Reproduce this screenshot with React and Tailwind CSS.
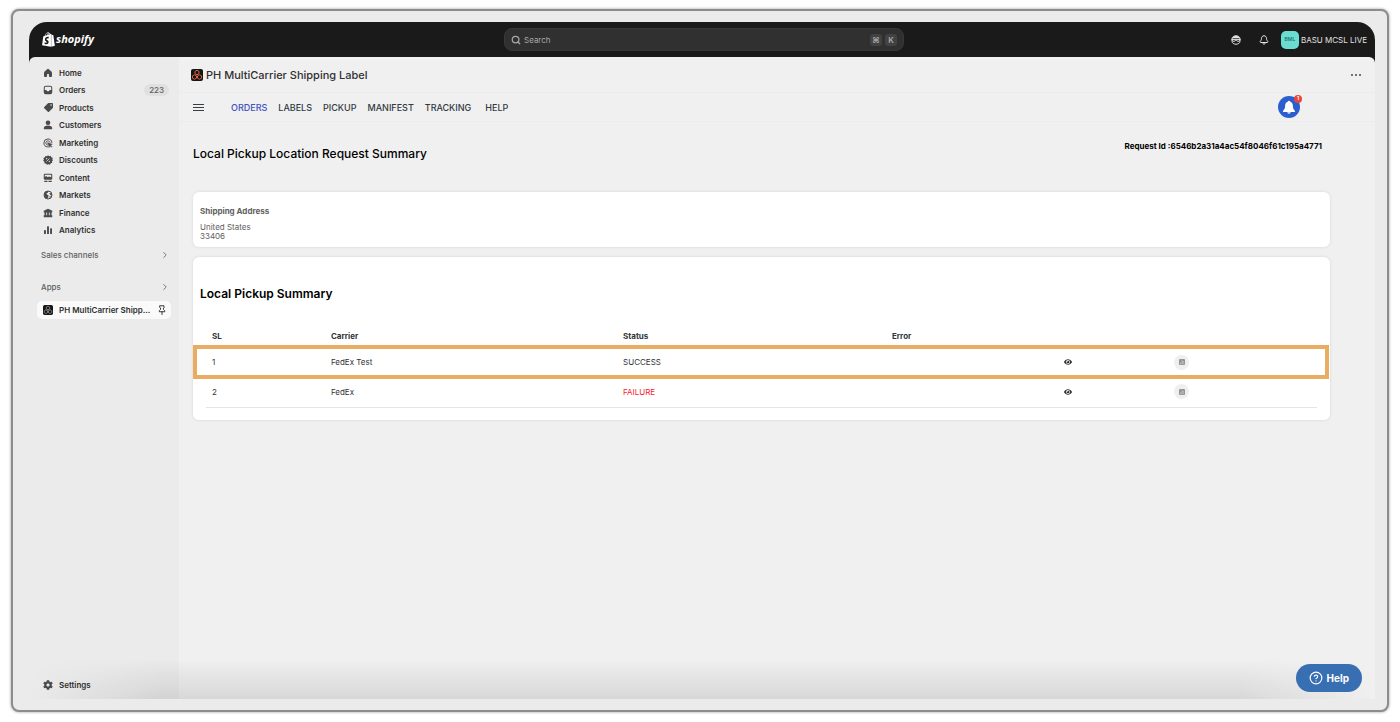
import { useState } from "react";
import { FaTag, FaEye, FaShopify, FaCog } from "react-icons/fa";
import { FiSearch, FiChevronRight, FiHelpCircle } from "react-icons/fi";

const HomeIcon = () => (
  <svg viewBox="0 0 20 20" className="size-[10px]" fill="currentColor">
    <path d="M8.300 2.300a2.400 2.400 0 0 1 3.400 0l5 4.700c.8.8 1.300 1.800 1.300 3V16a2 2 0 0 1-2 2h-2.500a1.500 1.500 0 0 1-1.500-1.500V13a1 1 0 0 0-1-1H9a1 1 0 0 0-1 1v3.500A1.500 1.500 0 0 1 6.500 18H4a2 2 0 0 1-2-2v-6c0-1.200.5-2.200 1.300-3z" />
  </svg>
);

const OrdersIcon = () => (
  <svg viewBox="0 0 20 20" className="size-[10px]" fill="currentColor">
    <path
      fillRule="evenodd"
      d="M5.500 1.500h9A4 4 0 0 1 18.500 5.500v9a4 4 0 0 1-4 4h-9a4 4 0 0 1-4-4v-9a4 4 0 0 1 4-4zM5.500 3.500a2 2 0 0 0-2 2V10h2.300c.7 0 1.200.4 1.500 1l.3.700c.2.500.6.800 1.100.800h2.600c.5 0 .9-.3 1.100-.8l.3-.7c.3-.6.8-1 1.500-1h2.300V5.500a2 2 0 0 0-2-2z"
    />
  </svg>
);

const CustomersIcon = () => (
  <svg viewBox="0 0 20 20" className="size-[10px]" fill="currentColor">
    <circle cx="10" cy="5.500" r="4.600" />
    <path d="M1.500 16.500C1.500 13 5.500 11 10 11s8.500 2 8.500 5.500c0 1.200-.8 2-2 2h-13c-1.200 0-2-.8-2-2z" />
  </svg>
);

const MarketingIcon = () => (
  <svg
    viewBox="0 0 20 20"
    className="size-[10px]"
    fill="none"
    stroke="currentColor"
    strokeWidth="2"
    strokeLinecap="round"
  >
    <path d="M17.800 9A8 8 0 1 0 9 17.900" />
    <path d="M14 8.500a4.300 4.300 0 1 0-5.500 5.500" />
    <path
      d="M9.500 9.500l9 3-3.500 1.800 3 3-1.200 1.200-3-3-1.600 3.200z"
      fill="currentColor"
      strokeWidth="1"
    />
  </svg>
);

const DiscountsIcon = () => (
  <svg viewBox="0 0 20 20" className="size-[10px]">
    <path
      fill="currentColor"
      d="M10 .5l2.400 2 3-.9 1.100 2.900 3 1-.9 3 1.400 2-2 2.200.5 3-3 .9-1.400 2.700-2.900-1L8 19.500l-2-2.400-3-.3-.2-3.100L.3 11.700l1.400-2.700L.9 6l2.800-1.400L5 1.800l3 .6z"
    />
    <path d="M7 13l6-6" stroke="#ebebeb" strokeWidth="1.500" />
    <circle cx="7.300" cy="7.300" r="1.400" fill="#ebebeb" />
    <circle cx="12.700" cy="12.700" r="1.400" fill="#ebebeb" />
  </svg>
);

const ContentIcon = () => (
  <svg viewBox="0 0 20 20" className="size-[10px]" fill="currentColor">
    <path
      fillRule="evenodd"
      d="M4 1.500h12A2.500 2.500 0 0 1 18.500 4v7a2.500 2.500 0 0 1-2.500 2.500H4A2.500 2.500 0 0 1 1.500 11V4A2.500 2.500 0 0 1 4 1.500zM3.500 8l3-1.800 3 2.300 2.500-1.500 4.500 1.500V4.500a1 1 0 0 0-1-1h-11a1 1 0 0 0-1 1z"
    />
    <path d="M2.500 15.500H9V18H2.500zM11 15.500h6.500V18H11z" />
  </svg>
);

const MarketsIcon = () => (
  <svg viewBox="0 0 20 20" className="size-[10px]">
    <circle
      cx="10"
      cy="10"
      r="8"
      fill="none"
      stroke="currentColor"
      strokeWidth="2"
    />
    <path
      fill="currentColor"
      d="M2.500 7.500C4 3.500 7.500 2 11 2.200L9.500 5.500 6.800 7l1 2.200 3.200 1.500-.6 3.800L8 17.500C4 17 1.500 12 2.500 7.500zM12.500 6l4 .3 1.500 4-3 .2zM12.500 13l3.500-.5-2 4.500z"
    />
  </svg>
);

const FinanceIcon = () => (
  <svg viewBox="0 0 20 20" className="size-[10px]" fill="currentColor">
    <path d="M10 1.500l8.500 4V9h-17V5.500z" />
    <path d="M3 8h3.500v7H3zM8.200 8h3.600v7H8.200zM13.500 8H17v7h-3.500zM1.500 14.500h17v4h-17z" />
  </svg>
);

const AnalyticsIcon = () => (
  <svg viewBox="0 0 20 20" className="size-[10px]" fill="currentColor">
    <rect x="2" y="10" width="3.800" height="8" rx="1.200" />
    <rect x="8.100" y="2.500" width="3.800" height="15.500" rx="1.200" />
    <rect x="14.200" y="6.500" width="3.800" height="11.500" rx="1.200" />
  </svg>
);

const PinIcon = () => (
  <svg
    viewBox="0 0 20 20"
    className="size-[10px] shrink-0"
    fill="none"
    stroke="currentColor"
    strokeWidth="1.900"
    strokeLinecap="round"
    strokeLinejoin="round"
  >
    <path d="M6 1.500h8V5l-1 1v3l2.500 2.500v2h-11v-2L7 9V6L6 5zM10 13.500V19" />
  </svg>
);

const SidekickIcon = () => (
  <svg viewBox="0 0 20 20" className="size-[10px]" fill="none">
    <path
      d="M2 8C2 4 5.500 1.500 10 1.500S18 4 18 8v4c0 4-3.500 6.500-8 6.500S2 16 2 12z"
      stroke="currentColor"
      strokeWidth="2"
    />
    <path d="M2 6.500C4 3 7 2 10 2s6 1 8 4.500z" fill="currentColor" />
    <path
      d="M1 8.800h18M3.500 9v2.500c1.500 2.300 4 2 5-.8h3c1 2.800 3.500 3.100 5 .8V9"
      stroke="currentColor"
      strokeWidth="2"
    />
  </svg>
);

const AlertIcon = () => (
  <svg
    viewBox="0 0 20 20"
    className="size-[10px]"
    fill="none"
    stroke="currentColor"
    strokeWidth="2"
    strokeLinejoin="round"
  >
    <path d="M10 1.500C7 1.500 5 3.800 5 6.500c0 3-.7 4-2.300 5.700-1 1.100-.5 2.800 1 2.800h12.600c1.500 0 2-1.700 1-2.800C15.700 10.500 15 9.500 15 6.500c0-2.700-2-5-5-5zM7.500 15c0 2 1 3.300 2.500 3.300s2.500-1.300 2.500-3.300" />
  </svg>
);

const BellIcon = () => (
  <svg viewBox="0 0 20 20" className="size-[14px]" fill="currentColor">
    <circle cx="10" cy="2.500" r="1.500" />
    <path d="M10 2C6.500 2 4.500 4.500 4.500 8c0 4-1 5.500-3 7.500V17h17v-1.500c-2-2-3-3.500-3-7.500 0-3.500-2-6-5.500-6zM7.500 17.500h5a2.500 2 0 0 1-5 0z" />
  </svg>
);

// App logo, coloured in the title bar and grey in the sidebar
const AppLogo = ({ className }) => (
  <svg viewBox="0 0 24 24" className={className} fill="none">
    <rect width="24" height="24" rx="4" fill="#151515" />
    <g stroke="currentColor" strokeWidth="2">
      <path d="M12 2.500l4 2.200v4.600l-4 2.200-4-2.200V4.700z" />
      <path d="M7 11.500l4 2.200v4.600l-4 2.200-4-2.200v-4.600z" />
      <path d="M17 11.500l4 2.200v4.600l-4 2.200-4-2.200v-4.600z" />
    </g>
  </svg>
);

const DocumentIcon = () => (
  <svg viewBox="0 0 12 12" className="size-[6px]">
    <rect width="12" height="12" rx="2" fill="#949494" />
    <path d="M6 2v3h4M2 7.500h8M2 9.500h8" stroke="#d4d4d4" fill="none" />
  </svg>
);

const menuItems = [
  { label: "Home", icon: <HomeIcon /> },
  { label: "Orders", icon: <OrdersIcon />, badge: "223" },
  { label: "Products", icon: <FaTag className="size-[9px] -scale-x-100" /> },
  { label: "Customers", icon: <CustomersIcon /> },
  { label: "Marketing", icon: <MarketingIcon /> },
  { label: "Discounts", icon: <DiscountsIcon /> },
  { label: "Content", icon: <ContentIcon /> },
  { label: "Markets", icon: <MarketsIcon /> },
  { label: "Finance", icon: <FinanceIcon /> },
  { label: "Analytics", icon: <AnalyticsIcon /> },
];

const tabs = ["ORDERS", "LABELS", "PICKUP", "MANIFEST", "TRACKING", "HELP"];

const requests = [
  { sl: 1, carrier: "FedEx Test", status: "SUCCESS", error: "" },
  { sl: 2, carrier: "FedEx", status: "FAILURE", error: "" },
];

const Header = () => (
  <header className="flex h-[35px] shrink-0 items-center justify-between rounded-t-[18px] bg-[#1a1a1a] pr-2 pl-3">
    <a
      href="#"
      aria-label="shopify"
      className="flex flex-1 items-center text-white"
    >
      <FaShopify className="size-[15px]" />
      <span className="font-['Open_Sans',sans-serif] text-[11px] font-bold italic">
        shopify
      </span>
    </a>

    <label className="flex h-[23px] w-[400px] items-center rounded-lg border border-[#383838] bg-[#303030] px-[6px] text-[#a8a8a8]">
      <FiSearch className="size-[10px]" strokeWidth={3} />
      <input
        type="text"
        aria-label="Search"
        placeholder="Search"
        className="ml-[3px] min-w-0 flex-1 bg-transparent text-[8px] outline-none placeholder:text-[#a8a8a8]"
      />
      <kbd className="flex size-3 items-center justify-center rounded-[3px] bg-[#424242] font-[Inter,'DejaVu_Sans',sans-serif] text-[8px] font-semibold">
        ⌘
      </kbd>
      <kbd className="ml-[3px] flex size-3 items-center justify-center rounded-[3px] bg-[#424242] font-[Inter,sans-serif] text-[8px] font-semibold">
        K
      </kbd>
    </label>

    <div className="flex flex-1 items-center justify-end text-[#e3e3e3]">
      <button aria-label="Sidekick">
        <SidekickIcon />
      </button>
      <button aria-label="Alerts" className="ml-[18px]">
        <AlertIcon />
      </button>
      <button className="ml-3 flex items-center gap-[2px] text-[8px]">
        <span className="flex size-[18px] items-center justify-center rounded-[5px] bg-[#6bdcd0] text-[5px] font-medium text-[#156a62]">
          BML
        </span>
        BASU MCSL LIVE
      </button>
    </div>
  </header>
);

const Sidebar = () => (
  <aside className="flex w-[150px] shrink-0 flex-col rounded-tl-md bg-[#ebebeb] px-2 pt-[7px] text-[8px] font-semibold text-[#303030]">
    <nav className="grid h-[175px] auto-rows-fr">
      {menuItems.map((item) => (
        <a key={item.label} href="#" className="flex items-center pl-[6px]">
          <span className="flex w-[10px] justify-center text-[#4a4a4a]">
            {item.icon}
          </span>
          <span className="ml-[6px]">{item.label}</span>
          {item.badge && (
            <span className="mr-[2px] ml-auto rounded-md bg-[#e0e0e0] px-[5px] leading-3 font-medium text-[#616161]">
              {item.badge}
            </span>
          )}
        </a>
      ))}
    </nav>

    <button className="mt-2 flex h-4 items-center justify-between pr-[1px] pl-1 font-medium text-[#616161]">
      Sales channels
      <FiChevronRight className="size-[10px]" />
    </button>
    <button className="mt-4 flex h-4 items-center justify-between pr-[1px] pl-1 font-medium text-[#616161]">
      Apps
      <FiChevronRight className="size-[10px]" />
    </button>
    <a
      href="#"
      className="mt-[6px] flex h-[18px] items-center rounded-[5px] bg-[#fafafa] pr-1 pl-[6px]"
    >
      <AppLogo className="size-[10px] shrink-0 text-[#8f8f8f]" />
      <span className="mr-auto ml-[6px] whitespace-nowrap">
        PH MultiCarrier Shipp...
      </span>
      <PinIcon />
    </a>

    <a href="#" className="mt-auto mb-2 flex items-center pl-[6px]">
      <FaCog className="size-[10px] text-[#4a4a4a]" />
      <span className="ml-[6px]">Settings</span>
    </a>
  </aside>
);

const PickupTable = () => (
  <table className="w-full table-fixed text-left text-[8px] text-[#303438]">
    <colgroup>
      <col className="w-[10.7%]" />
      <col className="w-[26.3%]" />
      <col className="w-[24.2%]" />
      <col className="w-[15.3%]" />
      <col className="w-[10.1%]" />
      <col />
    </colgroup>
    <thead>
      <tr className="h-[23px]">
        <th className="px-[6px] font-bold">SL</th>
        <th className="px-[6px] font-bold">Carrier</th>
        <th className="px-[6px] font-bold">Status</th>
        <th className="px-[6px] font-bold">Error</th>
        <th aria-label="View" />
        <th aria-label="Document" />
      </tr>
    </thead>
    <tbody>
      {requests.map((row, index) => (
        <tr
          key={row.sl}
          className="relative h-[30px] last:border-b last:border-[#e4e4e4]"
        >
          <td className="px-[6px]">
            {/* Highlighted row runs to the card edges */}
            {index === 0 && (
              <span className="pointer-events-none absolute -inset-y-[2px] -right-3 -left-[13px] border-4 border-[#e9ac63]" />
            )}
            {row.sl}
          </td>
          <td className="px-[6px]">{row.carrier}</td>
          <td
            className={
              row.status === "FAILURE" ? "px-[6px] text-[#f5222d]" : "px-[6px]"
            }
          >
            {row.status}
          </td>
          <td className="px-[6px]">{row.error}</td>
          <td className="px-2">
            <button aria-label="View" className="block">
              <FaEye className="size-2" />
            </button>
          </td>
          <td className="px-[6px]">
            <button
              aria-label="Document"
              className="flex size-[15px] items-center justify-center rounded-full bg-[#efefef]"
            >
              <DocumentIcon />
            </button>
          </td>
        </tr>
      ))}
    </tbody>
  </table>
);

const App = () => {
  const [activeTab, setActiveTab] = useState("ORDERS");

  return (
    <div className="flex min-h-screen flex-col bg-white pt-[9px] pr-[11px] pb-[10px] pl-[11px] font-[Inter,sans-serif]">
      <div className="flex flex-1 flex-col rounded-lg border-2 border-[#8c8c8c] bg-[#ebebeb] pt-[11px] pr-3 pb-[11px] pl-4 shadow-[0_0_3px_#999]">
        <Header />

        <div className="relative flex flex-1 bg-[linear-gradient(#1a1a1a_6px,transparent_6px)]">
          <Sidebar />

          <main className="min-w-0 flex-1 rounded-tr-md bg-[#f0f0f0]">
            {/* App title */}
            <div className="flex h-[36px] items-center border-b border-[#ececec] pt-px pr-[14px] pl-3">
              <AppLogo className="size-3 text-[#d9633f]" />
              <h1 className="ml-[3px] text-[11px] font-medium text-[#303030]">
                PH MultiCarrier Shipping Label
              </h1>
              <button
                aria-label="More actions"
                className="ml-auto flex gap-[2px] text-[#4a4a4a]"
              >
                <span className="size-[2px] rounded-full bg-current" />
                <span className="size-[2px] rounded-full bg-current" />
                <span className="size-[2px] rounded-full bg-current" />
              </button>
            </div>

            {/* Tabs */}
            <div className="flex h-[29px] items-center border-b border-[#ececec] pr-[75px] pl-[14px]">
              <button
                aria-label="Menu"
                className="flex w-[11px] flex-col gap-[2px]"
              >
                <span className="h-px bg-[#3a3f44]" />
                <span className="h-px bg-[#3a3f44]" />
                <span className="h-px bg-[#3a3f44]" />
              </button>
              <nav className="ml-[27px] flex gap-[11px] pt-px text-[9px] font-medium text-[#303a44]">
                {tabs.map((tab) => (
                  <button
                    key={tab}
                    onClick={() => setActiveTab(tab)}
                    className={
                      tab === activeTab ? "text-[#4250c4]" : "last:ml-[3px]"
                    }
                  >
                    {tab}
                  </button>
                ))}
              </nav>
              <button
                aria-label="Notifications"
                className="relative ml-auto flex size-[22px] items-center justify-center rounded-full bg-[#2b5fd0] text-white"
              >
                <BellIcon />
                <span className="absolute -top-[1px] -right-[2px] flex size-2 items-center justify-center rounded-full bg-[#e8453c] text-[5px] font-bold">
                  1
                </span>
              </button>
            </div>

            <div className="pr-[45px] pl-[14px]">
              {/* Page heading */}
              <div className="flex items-start justify-between pt-[18px] pr-2">
                <h2 className="mt-[6px] text-xs leading-4 font-medium text-black">
                  Local Pickup Location Request Summary
                </h2>
                <p className="text-[8px] leading-3 font-bold text-black">
                  Request Id :6546b2a31a4ac54f8046f61c195a4771
                </p>
              </div>

              {/* Shipping address */}
              <section className="mt-[30px] rounded-md bg-white px-[7px] pt-[14px] pb-[6px] text-[8px] text-[#616161] shadow-[0_0_3px_#d4d4d4]">
                <h3 className="leading-[10px] font-bold">Shipping Address</h3>
                <p className="mt-[7px] leading-[9px]">
                  United States
                  <br />
                  33406
                </p>
              </section>

              {/* Pickup summary */}
              <section className="mt-[10px] rounded-md bg-white pt-[29px] pb-3 shadow-[0_0_3px_#d4d4d4]">
                <h3 className="px-[7px] text-xs leading-4 font-semibold text-black">
                  Local Pickup Summary
                </h3>
                <div className="mt-[22px] px-[13px]">
                  <PickupTable />
                </div>
              </section>
            </div>
          </main>

          {/* Soft shade along the bottom */}
          <div className="pointer-events-none absolute inset-x-0 bottom-0 h-10 bg-linear-to-t from-black/10 to-transparent mask-x-from-90% mask-x-to-100%" />

          <button className="absolute right-[13px] bottom-[7px] flex h-[28px] items-center gap-1 rounded-full bg-[#386fb3] px-[13px] text-[10px] font-bold text-white">
            <FiHelpCircle className="size-[14px]" />
            Help
          </button>
        </div>
      </div>
    </div>
  );
};

export default App;
